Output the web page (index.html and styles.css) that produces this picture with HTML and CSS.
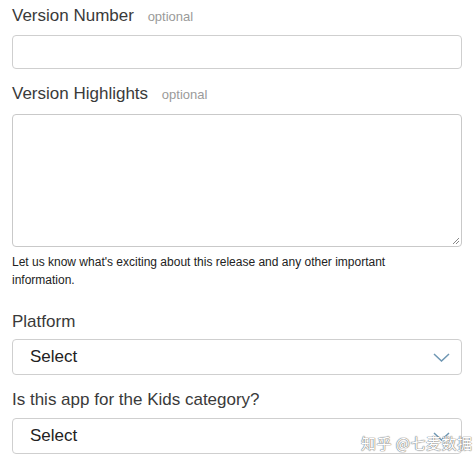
FILE: index.html
```html
<!DOCTYPE html>
<html>
<head>
<meta charset="utf-8">
<link rel="stylesheet" href="styles.css">
</head>
<body>
<div class="form">
  <div class="label label-first">Version Number <span class="opt">optional</span></div>
  <div class="input"></div>

  <div class="label label-second">Version Highlights <span class="opt">optional</span></div>
  <div class="textarea">
    <svg class="grip" width="8" height="8" viewBox="0 0 8 8"><path d="M7 1 L1 7 M7 4 L4 7" stroke="#888" stroke-width="1" fill="none"/></svg>
  </div>
  <p class="help">Let us know what's exciting about this release and any other important information.</p>

  <div class="label label-platform">Platform</div>
  <div class="select">
    <span>Select</span>
    <svg class="chev" width="17" height="9" viewBox="0 0 17 9"><path d="M1 1 L8.5 8 L16 1" stroke="#6f97b3" stroke-width="1.5" fill="none"/></svg>
  </div>

  <div class="label label-kids">Is this app for the Kids category?</div>
  <div class="select">
    <span>Select</span>
    <svg class="chev" width="17" height="9" viewBox="0 0 17 9"><path d="M1 1 L8.5 8 L16 1" stroke="#6f97b3" stroke-width="1.5" fill="none"/></svg>
  </div>
</div>
<div class="watermark">知乎 @七麦数据</div>
</body>
</html>
```
FILE: styles.css
```css
html, body {
  margin: 0;
  padding: 0;
  background: #fff;
}
body {
  font-family: "Liberation Sans", Arial, "Noto Sans CJK SC", sans-serif;
  color: #333;
  position: relative;
  width: 476px;
  height: 464px;
  overflow: hidden;
}
.form {
  padding: 0 14px 0 12px;
  display: flex;
  flex-direction: column;
}
.label {
  font-size: 17px;
  line-height: 20px;
  color: #3a3a3a;
  white-space: nowrap;
}
.opt {
  font-size: 13px;
  color: #9a9a9a;
  margin-left: 9px;
}
.label-first { margin-top: 6px; margin-bottom: 8px; }
.label-second { margin-top: 15px; margin-bottom: 9px; }
.label-platform { margin-top: 23px; margin-bottom: 7px; }
.label-kids { margin-top: 15px; margin-bottom: 8px; }
.input {
  height: 32px;
  border: 1px solid #cfcfcf;
  border-radius: 4px;
}
.textarea {
  height: 131px;
  border: 1px solid #c9c9c9;
  border-radius: 4px;
  position: relative;
}
.grip {
  position: absolute;
  right: 1px;
  bottom: 1px;
}
.help {
  margin: 6px 0 0 0;
  font-size: 12px;
  line-height: 18px;
  color: #222;
  padding-right: 40px;
}
.select {
  height: 34px;
  border: 1px solid #cfcfcf;
  border-radius: 4px;
  display: flex;
  align-items: center;
  justify-content: space-between;
  padding: 0 11px 0 17px;
  font-size: 17px;
  color: #222;
}
.chev {
  display: block;
}
.watermark {
  position: absolute;
  left: 361px;
  top: 432px;
  font-family: "Noto Sans CJK SC", sans-serif;
  font-size: 15px;
  color: #fff;
  letter-spacing: 0.5px;
  text-shadow: 0 0 1px #777, 0 0 1px #777, 0 0 1px #999;
}
```
